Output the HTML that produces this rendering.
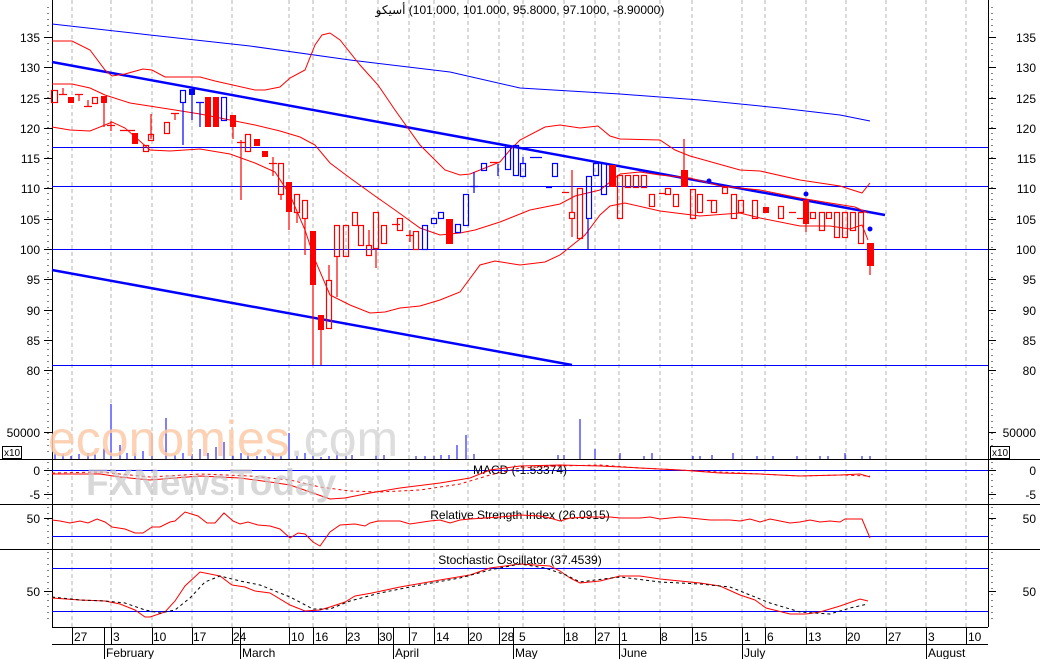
<!DOCTYPE html>
<html><head><meta charset="utf-8"><style>
html,body{margin:0;padding:0;background:#fff;}
svg{display:block;font-family:"Liberation Sans","Noto Sans CJK SC",sans-serif;}
#t{position:absolute;left:0;top:3px;width:1040px;text-align:center;font:12px "Liberation Sans","DejaVu Sans",sans-serif;direction:ltr;unicode-bidi:isolate;}
</style></head><body>
<div id="t" dir="ltr">&#x200E;<bdi>أسيكو</bdi> (101.000, 101.000, 95.8000, 97.1000, -8.90000)</div>
<svg width="1040" height="659" viewBox="0 0 1040 659" xmlns="http://www.w3.org/2000/svg">
<rect width="1040" height="659" fill="#fff"/>
<g stroke="#b4b4b4" stroke-width="1" stroke-dasharray="4,3">
<path d="M72 0V627M111 0V627M152 0V627M192 0V627M232 0V627M289 0V627M313 0V627M346 0V627M378 0V627M409 0V627M434 0V627M468 0V627M499 0V627M523 0V627M564 0V627M595 0V627M619 0V627M660 0V627M692 0V627M742 0V627M765 0V627M806 0V627M846 0V627M886 0V627M926 0V627M966 0V627"/>
</g>
<g stroke="#000" stroke-width="1" fill="none">
<path d="M52.5 0V627M988.5 0V627"/>
<path d="M0 459.5H1040M0 504.5H1040M0 549.5H1040M52 627.5H988M52 644.5H988"/>
</g>
<g stroke="#000" stroke-width="1">
<path d="M44 37.5h8M44 67.5h8M44 98.5h8M44 128.5h8M44 158.5h8M44 188.5h8M44 219.5h8M44 249.5h8M44 279.5h8M44 310.5h8M44 340.5h8M44 370.5h8M44 432.5h8M44 470.5h8M44 494.5h8M44 518.5h8M44 591.5h8"/>
<path d="M988 37.5h8M988 67.5h8M988 98.5h8M988 128.5h8M988 158.5h8M988 188.5h8M988 219.5h8M988 249.5h8M988 279.5h8M988 310.5h8M988 340.5h8M988 370.5h8M988 432.5h8M988 470.5h8M988 494.5h8M988 518.5h8M988 591.5h8"/>
</g>
<g stroke="#000" stroke-width="1" stroke-dasharray="1,5">
<path d="M48 7V456M48 462V502M48 507V547M48 552V624"/>
<path d="M992 7V456M992 462V502M992 507V547M992 552V624"/>
</g>
<g font-size="12" fill="#000">
<g text-anchor="end">
<text x="40" y="42">135</text><text x="40" y="72">130</text><text x="40" y="103">125</text><text x="40" y="133">120</text><text x="40" y="163">115</text><text x="40" y="193">110</text><text x="40" y="224">105</text><text x="40" y="254">100</text><text x="40" y="284">95</text><text x="40" y="315">90</text><text x="40" y="345">85</text><text x="40" y="375">80</text><text x="40" y="437">50000</text><text x="40" y="475">0</text><text x="40" y="499">-5</text><text x="40" y="523">50</text><text x="40" y="596">50</text>
<text x="1036" y="42">135</text><text x="1036" y="72">130</text><text x="1036" y="103">125</text><text x="1036" y="133">120</text><text x="1036" y="163">115</text><text x="1036" y="193">110</text><text x="1036" y="224">105</text><text x="1036" y="254">100</text><text x="1036" y="284">95</text><text x="1036" y="315">90</text><text x="1036" y="345">85</text><text x="1036" y="375">80</text><text x="1036" y="437">50000</text><text x="1036" y="475">0</text><text x="1036" y="499">-5</text><text x="1036" y="523">50</text><text x="1036" y="596">50</text>
</g>
</g>
<rect x="2.5" y="446.5" width="19" height="12" fill="#fff" stroke="#000"/>
<text x="4" y="456" font-size="10">x10</text>
<rect x="990.5" y="446.5" width="19" height="12" fill="#fff" stroke="#000"/>
<text x="992" y="456" font-size="10">x10</text>

<g stroke="#0000ff" stroke-width="1">
<path d="M52 147.5H988M52 186.5H988M52 249.5H988M52 365.5H988"/>
<path d="M52 470.5H988M52 536.5H988M52 568.5H988M52 611.5H988"/>
</g>
<polyline fill="none" stroke="#0000ff" stroke-width="1" points="52,24 150,35 250,46 350,60 450,72 520,88 620,94 700,100 780,108 840,115 870,121"/>
<path d="M52 62L885 215" stroke="#0000ff" stroke-width="2.5"/>
<path d="M52 270L572 365" stroke="#0000ff" stroke-width="2.5"/>
<g fill="none" stroke="#ff0000" stroke-width="1">
<polyline points="52,41 72,41 90,50 105,70 112,76 125,74 143,69 152,70 165,77 200,77 215,81 255,90 265,90 280,87 290,78 305,70 315,45 322,35 330,33 340,40 360,65 378,85 395,110 420,145 435,160 445,170 460,175 470,174 480,170 500,162 510,150 520,140 545,127 560,125 580,128 598,126 610,136 620,139 660,140 675,150 690,156 715,163 740,170 760,171 800,180 840,186 862,193 870,183"/>
<polyline points="52,84 72,84 90,88 105,95 130,103 175,110 200,114 220,118 255,125 280,131 300,137 315,145 330,163 350,178 375,196 395,210 420,228 440,235 460,233 475,230 500,222 530,210 560,204 575,196 600,190 620,174 640,172 660,175 690,178 720,186 760,190 800,198 830,203 855,207 868,213"/>
<polyline points="52,127 70,130 90,131 105,125 112,122 125,128 150,150 170,151 200,149 230,154 255,163 275,172 290,195 305,230 315,260 330,295 350,305 370,313 385,312 400,308 420,306 440,300 460,292 480,265 495,261 520,265 545,262 560,255 575,243 585,235 600,215 610,206 625,203 660,211 700,216 740,213 760,218 800,226 830,226 850,229 862,225 868,240"/>
</g>
<g stroke="#ff0000" stroke-width="1.2" fill="none">
<path d="M63 88v6M59 94.5h8M79 94v7M75 94.5h8M88 100v7M84 106.5h8M111 121v10M107 125.5h8M120 130.5h8M127 130.5h8M175 113v7M171 113.5h8M241 140v60M237 142.5h8M273 157v19M269 163.5h8M392 224.5h8M410 230v12M406 235.5h8M490 162.5h8M562 192.5h7M659 193.5h7M707 200.5h6M789 212.5h7M797 218.5h6"/>
<rect x="51.5" y="90.5" width="6" height="12"/>
<rect x="92.5" y="97.5" width="5" height="6"/>
<rect x="143.5" y="145.5" width="5" height="6"/><path d="M151 114v25"/>
<rect x="148.5" y="134.5" width="5" height="6"/>
<rect x="164.5" y="122.5" width="5" height="11"/>
<rect x="245.5" y="134.5" width="5" height="17"/>
<rect x="278.5" y="163.5" width="5" height="31"/><path d="M281 195v5"/>
<rect x="294.5" y="194.5" width="5" height="18"/><path d="M297 212v11"/>
<rect x="302.5" y="200.5" width="5" height="18"/><path d="M305 218v37"/>
<rect x="326.5" y="280.5" width="5" height="48"/><path d="M329 265v15"/>
<rect x="334.5" y="225.5" width="5" height="31"/><path d="M337 256v41"/>
<rect x="343.5" y="225.5" width="5" height="31"/>
<rect x="352.5" y="212.5" width="5" height="13"/>
<rect x="358.5" y="225.5" width="5" height="20"/>
<rect x="366.5" y="245.5" width="5" height="10"/><path d="M369 230v15"/>
<rect x="373.5" y="212.5" width="5" height="36"/><path d="M376 248v20"/>
<rect x="381.5" y="225.5" width="5" height="18"/>
<rect x="397.5" y="218.5" width="5" height="12"/>
<rect x="413.5" y="231.5" width="5" height="18"/>
<rect x="569.5" y="212.5" width="5" height="6"/><path d="M572 170v42M572 218v19"/>
<rect x="577.5" y="188.5" width="5" height="50"/>
<rect x="617.5" y="175.5" width="5" height="43"/>
<rect x="625.5" y="175.5" width="5" height="12"/>
<rect x="633.5" y="175.5" width="5" height="12"/>
<rect x="641.5" y="175.5" width="5" height="12"/>
<rect x="649.5" y="194.5" width="5" height="12"/>
<rect x="665.5" y="188.5" width="5" height="6"/>
<rect x="673.5" y="194.5" width="5" height="12"/>
<rect x="690.5" y="189.5" width="5" height="29"/>
<rect x="697.5" y="194.5" width="5" height="18"/>
<rect x="711.5" y="200.5" width="5" height="12"/>
<rect x="722.5" y="187.5" width="5" height="6"/>
<rect x="731.5" y="194.5" width="5" height="24"/>
<rect x="738.5" y="200.5" width="5" height="12"/>
<rect x="752.5" y="200.5" width="5" height="18"/>
<rect x="778.5" y="206.5" width="5" height="12"/>
<rect x="810.5" y="212.5" width="5" height="6"/>
<rect x="819.5" y="212.5" width="5" height="18"/>
<rect x="826.5" y="212.5" width="5" height="6"/>
<rect x="834.5" y="212.5" width="5" height="25"/>
<rect x="842.5" y="212.5" width="5" height="25"/>
<rect x="850.5" y="212.5" width="5" height="18"/>
<rect x="858.5" y="212.5" width="5" height="31"/>
<path d="M104 102v25M233 127v12M289 212v18M313 285v80M321 330v35M684 139v31M806 224v8M870 266v9"/>
</g>
<g fill="#ff0000">
<rect x="68" y="97" width="6" height="6"/>
<rect x="101" y="96" width="6" height="7"/>
<rect x="132" y="133" width="6" height="11"/>
<rect x="205" y="97" width="6" height="30"/>
<rect x="213" y="97" width="6" height="30"/>
<rect x="230" y="115" width="6" height="12"/>
<rect x="254" y="139" width="6" height="7"/>
<rect x="262" y="151" width="6" height="6"/>
<rect x="286" y="182" width="6" height="30"/>
<rect x="310" y="231" width="6" height="54"/>
<rect x="318" y="315" width="6" height="15"/>
<rect x="446" y="219" width="7" height="25"/>
<rect x="609" y="165" width="7" height="22"/>
<rect x="681" y="170" width="7" height="17"/>
<rect x="763" y="207" width="6" height="6"/>
<rect x="803" y="200" width="6" height="24"/>
<rect x="867" y="243" width="7" height="23"/>
</g>
<g stroke="#0000ff" stroke-width="1.2" fill="none">
<rect x="180.5" y="90.5" width="5" height="12"/><path d="M183 102v43"/>
<path d="M192 95v25M200 102v25M196 102.5h8M474 172v21M470 186.5h8M498 164v12M530 157.5h12M546 187.5h6M588 218v31"/>
<rect x="221.5" y="97.5" width="5" height="23"/>
<rect x="422.5" y="225.5" width="5" height="24"/>
<rect x="431.5" y="218.5" width="5" height="5"/>
<rect x="438.5" y="212.5" width="5" height="6"/>
<rect x="455.5" y="224.5" width="5" height="8"/>
<rect x="463.5" y="194.5" width="5" height="31"/>
<rect x="481.5" y="163.5" width="5" height="7"/>
<rect x="505.5" y="145.5" width="5" height="24"/>
<rect x="513.5" y="145.5" width="5" height="30"/>
<rect x="520.5" y="163.5" width="5" height="13"/><path d="M523 157v6"/>
<rect x="552.5" y="163.5" width="5" height="13"/>
<rect x="586.5" y="176.5" width="5" height="42"/>
<rect x="593.5" y="163.5" width="5" height="12"/>
<rect x="601.5" y="163.5" width="5" height="31"/>
</g>
<rect x="189" y="89" width="6" height="6" fill="#0000ff"/>
<g fill="#0000ff"><circle cx="709" cy="181" r="2.5"/><circle cx="806" cy="194" r="2.5"/><circle cx="870" cy="229" r="2.5"/></g>

<g stroke="#0000ff" stroke-width="1">
<path d="M55 459v-6M63 459v-5M71 459v-3M79 459v-5M88 459v-6M95 459v-5M104 459v-11M111 459v-55M120 459v-14M127 459v-6M135 459v-6M143 459v-8M152 459v-26M166 459v-41M175 459v-4M183 459v-6M192 459v-5M200 459v-10M208 459v-6M216 459v-12M224 459v-17M233 459v-4M241 459v-6M248 459v-6M257 459v-3M265 459v-3M273 459v-6M281 459v-3M289 459v-26M297 459v-3M305 459v-6M313 459v-3M321 459v-2M329 459v-3M337 459v-8M346 459v-3M352 459v-4M376 459v-4M384 459v-4M416 459v-3M425 459v-3M434 459v-3M441 459v-4M449 459v-4M457 459v-14M466 459v-24M474 459v-5M558 459v-4M564 459v-4M580 459v-40M595 459v-10M620 459v-6M644 459v-3M652 459v-6M693 459v-3M700 459v-3M712 459v-4M733 459v-6M757 459v-3M773 459v-3M797 459v-3M820 459v-3M828 459v-3M845 459v-6M862 459v-3M870 459v-3"/>
</g>

<text x="520" y="474" font-size="12" text-anchor="middle">MACD (-1.53374)</text>
<polyline fill="none" stroke="#ff0000" stroke-width="1" points="52,474 100,474 120,477 150,480 200,476 240,478 270,482 290,485 313,493 330,499 345,498 370,493 400,488 440,483 470,478 490,470 520,466 560,465 600,466 640,468 680,470 720,473 760,474 800,476 840,475 860,474 870,477"/>
<polyline fill="none" stroke="#ff0000" stroke-width="1" stroke-dasharray="3,3" points="52,473 100,472 150,477 200,474 250,476 290,480 320,487 350,491 380,492 420,490 460,484 490,475 520,468 560,466 600,465 640,468 680,470 720,472 760,474 800,476 840,475 870,476"/>
<text x="520" y="519" font-size="12" text-anchor="middle">Relative Strength Index (26.0915)</text>
<polyline fill="none" stroke="#ff0000" stroke-width="1" points="52,520 60,521 70,523 80,521 88,523 97,519 105,522 112,527 125,529 135,533 143,533 152,527 160,527 170,522 175,521 185,512 198,516 207,523 215,523 224,513 233,521 240,524 248,522 258,525 270,526 280,529 290,538 298,533 305,534 313,542 320,546 330,532 340,525 355,524 365,526 370,523 378,521 400,521 410,524 430,521 440,520 450,523 460,520 470,519 500,517 520,515 540,516 550,518 560,521 570,518 590,517 610,517 620,518 640,518 650,517 660,519 680,517 700,519 710,520 730,520 740,521 750,519 760,522 770,519 780,521 790,523 800,522 810,520 820,522 830,521 840,522 845,519 862,519 870,538"/>
<text x="520" y="564" font-size="12" text-anchor="middle">Stochastic Oscillator (37.4539)</text>
<polyline fill="none" stroke="#ff0000" stroke-width="1" points="52,598 80,600 105,601 120,604 135,610 145,617 150,617 165,612 175,601 185,586 200,572 220,576 232,585 245,587 255,591 270,593 290,605 305,611 320,610 330,607 345,602 355,596 372,593 400,587 440,580 470,575 490,568 520,564 550,566 560,571 570,578 580,583 600,581 620,576 640,576 660,579 680,581 700,583 720,586 740,595 755,600 766,608 790,614 806,614 820,612 840,606 860,599 868,601"/>
<polyline fill="none" stroke="#000" stroke-width="1" stroke-dasharray="3,3" points="52,597 80,600 105,601 125,603 145,610 160,613 175,610 190,598 205,582 220,576 240,581 260,585 290,597 313,609 330,609 350,601 380,593 420,585 460,578 490,570 520,564 545,568 566,575 580,582 595,580 620,577 660,582 700,584 730,587 750,595 770,603 800,612 830,614 850,608 868,604"/>

<text x="48" y="456" font-size="50" fill="#fcc9a8" opacity="0.85" font-family="Liberation Sans,sans-serif">economies<tspan fill="#d8d8d8">.com</tspan></text>
<text x="86" y="495" font-size="37" fill="#c8c8c8" opacity="0.7" font-weight="bold" font-family="Liberation Sans,sans-serif">FXNewsToday</text>

<g stroke="#000" stroke-width="1">
<path d="M72.5 627v17M104.5 627v32M111.5 627v17M152.5 627v17M192.5 627v17M232.5 627v17M240.5 627v32M289.5 627v17M313.5 627v17M346.5 627v17M378.5 627v17M393.5 627v32M409.5 627v17M434.5 627v17M468.5 627v17M499.5 627v17M513.5 627v32M564.5 627v17M595.5 627v17M619.5 627v32M660.5 627v17M692.5 627v17M742.5 627v32M765.5 627v17M806.5 627v17M846.5 627v17M886.5 627v17M926.5 627v32M966.5 627v17"/>
</g>
<g font-size="12" fill="#000">
<text x="74" y="641">27</text><text x="113" y="641">3</text><text x="153" y="641">10</text><text x="193" y="641">17</text><text x="233" y="641">24</text><text x="291" y="641">10</text><text x="315" y="641">16</text><text x="347" y="641">23</text><text x="379" y="641">30</text><text x="411" y="641">7</text><text x="436" y="641">14</text><text x="469" y="641">20</text><text x="501" y="641">28</text><text x="519" y="641">5</text><text x="565" y="641">18</text><text x="597" y="641">27</text><text x="621" y="641">1</text><text x="661" y="641">8</text><text x="694" y="641">15</text><text x="744" y="641">1</text><text x="767" y="641">6</text><text x="808" y="641">13</text><text x="847" y="641">20</text><text x="888" y="641">27</text><text x="928" y="641">3</text><text x="968" y="641">10</text>
<text x="106" y="657">February</text><text x="242" y="657">March</text><text x="395" y="657">April</text><text x="515" y="657">May</text><text x="621" y="657">June</text><text x="744" y="657">July</text><text x="928" y="657">August</text>
</g>
</svg>
</body></html>
